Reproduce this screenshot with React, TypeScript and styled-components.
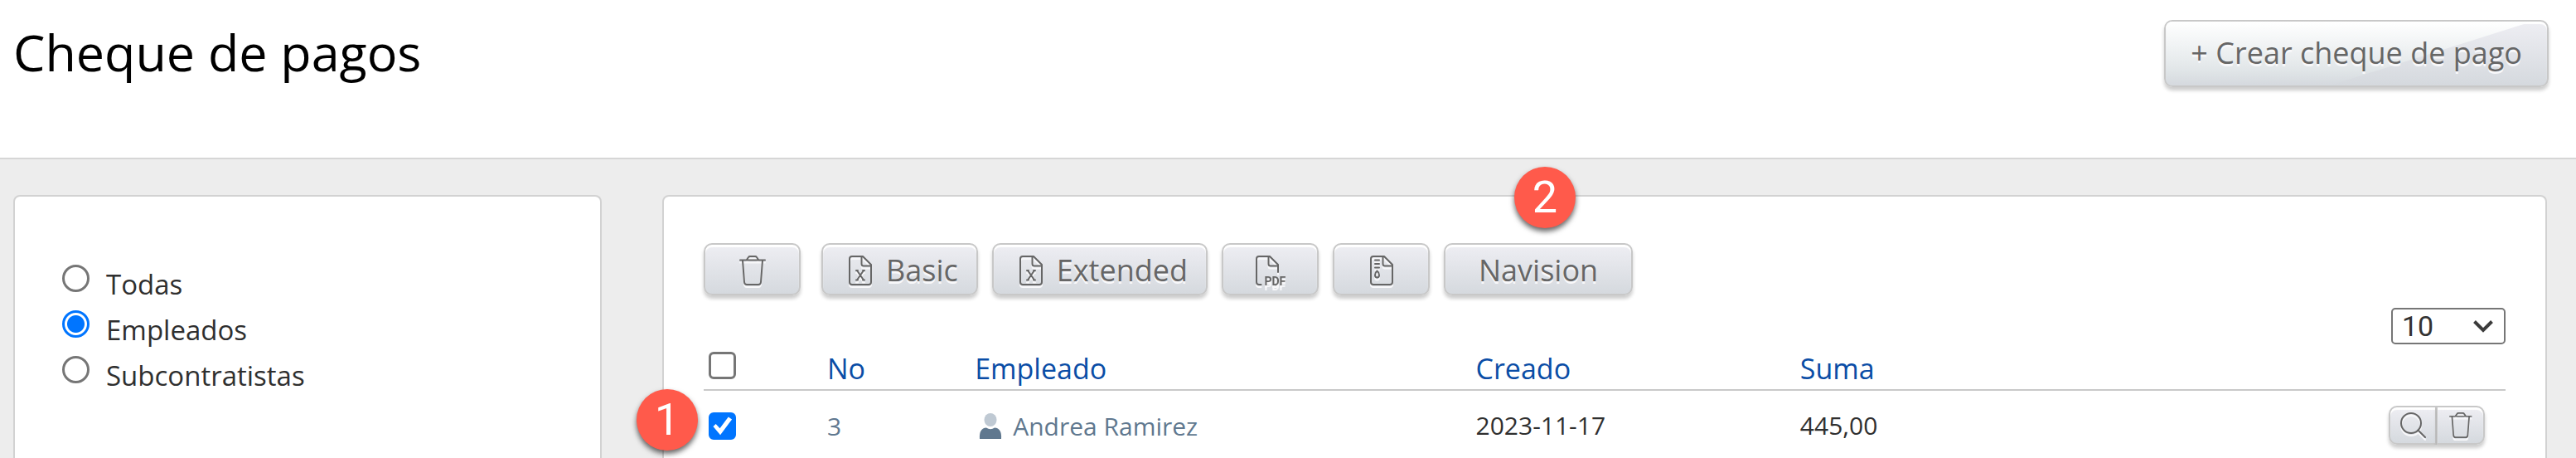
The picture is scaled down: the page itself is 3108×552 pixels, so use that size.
import React, { useState } from "react";
import styled, { createGlobalStyle, css } from "styled-components";

const GlobalStyle = createGlobalStyle`
  *, *::before, *::after { box-sizing: border-box; }
  body {
    margin: 0;
    background: #ededed;
    color: #2f2f2f;
    font-family: "Open Sans", "Noto Sans", sans-serif;
  }
`;

const Page = styled.div`
  display: flex;
  flex-direction: column;
  min-height: 100vh;
`;

const Header = styled.header`
  display: flex;
  align-items: flex-start;
  justify-content: space-between;
  padding: 24px 33px 85px 16px;
  background: #fff;
  border-bottom: 2px solid #d6d6d6;
`;

const Title = styled.h1`
  margin: 0;
  font-size: 61px;
  font-weight: 400;
  line-height: 78px;
  color: #000;
`;

const Content = styled.main`
  flex: 1;
  display: grid;
  grid-template-columns: 710px minmax(0, 1fr);
  gap: 73px;
  padding: 43px 35px 0 16px;
`;

const cardStyle = css`
  background: #fff;
  border: 2px solid #d2d2d2;
  border-bottom: 0;
  border-radius: 8px 8px 0 0;
`;

const Sidebar = styled.aside`
  ${cardStyle}
  padding: 76px 57px 0;
`;

const Panel = styled.section`
  ${cardStyle}
  padding: 56px 48px 0;
`;

const FilterGroup = styled.fieldset`
  margin: 0;
  padding: 0;
  border: 0;
`;

const FilterOption = styled.label`
  display: flex;
  align-items: flex-start;
  gap: 20px;
  height: 55px;
  font-size: 33px;
  line-height: 59px;
`;

const Radio = styled.input`
  appearance: none;
  flex: none;
  width: 33px;
  height: 33px;
  margin: 6px 0 0;
  border: 3px solid #767676;
  border-radius: 50%;
  background: #fff;
  &:checked {
    border-color: #0075ff;
    background: radial-gradient(circle, #0075ff 10px, #fff 11px);
  }
`;

const Checkbox = styled.input`
  appearance: none;
  display: block;
  width: 33px;
  height: 33px;
  margin: 0;
  border: 3px solid #767676;
  border-radius: 6px;
  background: #fff;
  &:checked {
    border-color: #0075ff;
    background: #0075ff;
  }
  &:checked::before {
    content: "";
    display: block;
    height: 27px;
    background: #fff;
    clip-path: polygon(9% 52%, 21% 41%, 39% 60%, 77% 9%, 93% 20%, 41% 90%);
  }
`;

const buttonStyle = css`
  color: #666;
  font-family: inherit;
  border: 2px solid #c8c8c8;
  background: linear-gradient(#eeeef3, #d5d9de);
  box-shadow: inset 0 3px 1px #fff, 0 4px 4px rgba(0, 0, 0, 0.2);
  text-shadow: 0 3px 0 #f8f8fa;
  cursor: pointer;
`;

const CreateButton = styled.button`
  ${buttonStyle}
  position: relative;
  height: 81px;
  padding: 0 30px 2px;
  border-radius: 10px;
  font-size: 36px;
  line-height: 48px;
  &::before {
    content: "";
    position: absolute;
    inset: 0;
    border-radius: 8px;
    background: linear-gradient(#fff, rgba(226, 231, 233, 0.9) 75%, #d5d9de);
    clip-path: polygon(0 0, 96% 0, 43% 100%, 0 100%);
  }
`;

const CreateLabel = styled.span`
  position: relative;
`;

const Toolbar = styled.div`
  display: flex;
  gap: 17px;
`;

const ToolGroup = styled.div`
  margin-right: 8px;
`;

const toolPadding = {
  icon: "2px 0 0",
  text: "2px 40px 0",
  labelled: "2px 22px 0 31px",
};

const ToolButton = styled.button<{ $kind: keyof typeof toolPadding }>`
  ${buttonStyle}
  position: relative;
  display: flex;
  align-items: center;
  justify-content: center;
  gap: 17px;
  height: 63px;
  min-width: 117px;
  padding: ${(p) => toolPadding[p.$kind]};
  border-radius: 10px;
  font-size: 36px;
  line-height: 48px;
`;

const Icon = styled.svg`
  flex: none;
  overflow: visible;
  fill: none;
  stroke: currentColor;
  stroke-width: 2;
  stroke-linecap: round;
  stroke-linejoin: round;
  filter: drop-shadow(0 3px 0 #f8f8fa);
`;

const IconText = styled.text`
  fill: currentColor;
  stroke: none;
  font: 700 14px Roboto, sans-serif;
`;

const Pager = styled.div`
  display: flex;
  justify-content: flex-end;
  margin-top: 15px;
`;

const SelectWrap = styled.div`
  display: grid;
  align-items: center;
  justify-items: end;
`;

const Select = styled.select`
  grid-area: 1 / 1;
  appearance: none;
  width: 138px;
  height: 44px;
  padding: 0 11px;
  border: 2px solid #767676;
  border-radius: 5px;
  background: #fff;
  color: #333;
  font: 34px Roboto, Arial, sans-serif;
`;

const Chevron = styled.svg`
  grid-area: 1 / 1;
  margin-right: 15px;
  fill: none;
  stroke: #3c3c3c;
  stroke-width: 4;
  pointer-events: none;
`;

const Table = styled.table`
  width: 100%;
  border-collapse: collapse;
  table-layout: fixed;
`;

const Col = styled.col<{ $width?: string }>`
  width: ${(p) => p.$width ?? "auto"};
`;

const HeadCell = styled.th`
  height: 55px;
  padding: 4px 25px 0;
  border-bottom: 2px solid #c9c9c9;
  color: #0a4da6;
  font-size: 34px;
  font-weight: 400;
  line-height: 46px;
  text-align: left;
`;

const Cell = styled.td`
  height: 84px;
  padding: 0 25px;
  font-size: 30px;
  line-height: 40px;
`;

const HeadCheckCell = styled(HeadCell)`
  padding: 0 6px 3px;
`;

const CheckCell = styled(Cell)`
  position: relative;
  padding: 2px 6px 0;
`;

const HeadLink = styled.a`
  color: inherit;
  text-decoration: none;
`;

const RowLink = styled.a`
  display: inline-flex;
  align-items: center;
  gap: 13px;
  color: #60788f;
  text-decoration: none;
  vertical-align: middle;
`;

const PersonIcon = styled.svg`
  margin-left: 5px;
`;

const RowActions = styled.div`
  display: flex;
  justify-content: flex-end;
`;

const RowButton = styled.button`
  ${buttonStyle}
  display: flex;
  align-items: center;
  justify-content: center;
  width: 58px;
  height: 47px;
  padding: 0;
  &:first-child {
    border-radius: 10px 0 0 10px;
  }
  &:last-child {
    border-left-width: 1px;
    border-radius: 0 10px 10px 0;
  }
`;

const StepBadge = styled.span<{ $place: "row" | "button" }>`
  position: absolute;
  ${(p) => (p.$place === "row" ? "left: -81px; top: -2px;" : "left: 83px; top: -94px;")}
  width: 74px;
  height: 74px;
  border-radius: 50%;
  background: #ff5a4b;
  box-shadow: 0 4px 6px rgba(0, 0, 0, 0.6);
  color: #fff;
  font: 54px/74px Roboto, Arial, sans-serif;
  text-align: center;
  text-shadow: none;
`;

const TrashIcon = ({ height = 36 }: { height?: number }) => (
  <Icon height={height} viewBox="0 0 32 36" aria-hidden="true">
    <path d="M1 5.500H31M9 5L11 2Q11.600 1 13 1H19Q20.400 1 21 2L23 5M4 6L6 32Q6.300 35 9 35H23Q25.700 35 26 32L28 6" />
  </Icon>
);

const SheetIcon = () => (
  <Icon width="28" height="36" viewBox="0 0 28 36" aria-hidden="true">
    <path d="M4 1H17L27 11V32Q27 35 24 35H4Q1 35 1 32V4Q1 1 4 1ZM15.500 1.500V10Q15.500 12.500 18 12.500H26.500" />
    <path d="M10 18L18 29.500M18 18L10 29.500M9 18H11M17 18H19M9 29.500H11M17 29.500H19" />
  </Icon>
);

const PdfIcon = () => (
  <Icon width="36" height="36" viewBox="0 0 36 36" aria-hidden="true">
    <path d="M6.500 35H4Q1 35 1 32V4Q1 1 4 1H17L27 11V20M15.500 1.500V10Q15.500 12.500 18 12.500H26.500" />
    <IconText x="10.500" y="35.500">PDF</IconText>
  </Icon>
);

const ZipIcon = () => (
  <Icon width="28" height="36" viewBox="0 0 28 36" aria-hidden="true">
    <path d="M4 1H17L27 11V32Q27 35 24 35H4Q1 35 1 32V4Q1 1 4 1ZM15.500 1.500V10Q15.500 12.500 18 12.500H26.500" />
    <path d="M6 5.500H11M6 10H11M6 14.500H11" />
    <path d="M8.500 18.500Q11 20.500 11 23.500Q11 26.500 8.500 26.500Q6 26.500 6 23.500Q6 20.500 8.500 18.500Z" />
  </Icon>
);

const SearchIcon = () => (
  <Icon width="31" height="31" viewBox="0 0 31 31" aria-hidden="true">
    <circle cx="13" cy="13" r="12" />
    <path d="M21.500 21.500L30 30" />
  </Icon>
);

const filters = ["Todas", "Empleados", "Subcontratistas"];

export default function App() {
  const [filter, setFilter] = useState("Empleados");
  const [selected, setSelected] = useState(true);

  return (
    <>
      <GlobalStyle />
      <Page>
        <Header>
          <Title>Cheque de pagos</Title>
          <CreateButton type="button">
            <CreateLabel>+ Crear cheque de pago</CreateLabel>
          </CreateButton>
        </Header>
        <Content>
          <Sidebar>
            <FilterGroup aria-label="Cheque de pagos">
              {filters.map((name) => (
                <FilterOption key={name}>
                  <Radio
                    type="radio"
                    name="filter"
                    checked={filter === name}
                    onChange={() => setFilter(name)}
                  />
                  {name}
                </FilterOption>
              ))}
            </FilterGroup>
          </Sidebar>
          <Panel>
            <Toolbar>
              <ToolGroup>
                <ToolButton type="button" $kind="icon" aria-label="Eliminar">
                  <TrashIcon />
                </ToolButton>
              </ToolGroup>
              <ToolButton type="button" $kind="labelled">
                <SheetIcon />
                Basic
              </ToolButton>
              <ToolButton type="button" $kind="labelled">
                <SheetIcon />
                Extended
              </ToolButton>
              <ToolButton type="button" $kind="icon" aria-label="PDF">
                <PdfIcon />
              </ToolButton>
              <ToolButton type="button" $kind="icon" aria-label="ZIP">
                <ZipIcon />
              </ToolButton>
              <ToolButton type="button" $kind="text">
                Navision
                <StepBadge $place="button">2</StepBadge>
              </ToolButton>
            </Toolbar>
            <Pager>
              <SelectWrap>
                <Select aria-label="Filas por página" defaultValue="10">
                  <option>10</option>
                  <option>25</option>
                  <option>50</option>
                </Select>
                <Chevron width="24" height="16" viewBox="0 0 24 16" aria-hidden="true">
                  <path d="M1.500 2.500L12 13L22.500 2.500" />
                </Chevron>
              </SelectWrap>
            </Pager>
            <Table>
              <colgroup>
                <Col $width="5.7%" />
                <Col $width="8.2%" />
                <Col $width="27.8%" />
                <Col $width="18%" />
                <Col />
                <Col $width="10%" />
              </colgroup>
              <thead>
                <tr>
                  <HeadCheckCell>
                    <Checkbox
                      type="checkbox"
                      aria-label="Seleccionar todo"
                    />
                  </HeadCheckCell>
                  <HeadCell><HeadLink href="#no">No</HeadLink></HeadCell>
                  <HeadCell><HeadLink href="#empleado">Empleado</HeadLink></HeadCell>
                  <HeadCell><HeadLink href="#creado">Creado</HeadLink></HeadCell>
                  <HeadCell><HeadLink href="#suma">Suma</HeadLink></HeadCell>
                  <HeadCell />
                </tr>
              </thead>
              <tbody>
                <tr>
                  <CheckCell>
                    <Checkbox
                      type="checkbox"
                      aria-label="Seleccionar 3"
                      checked={selected}
                      onChange={(e) => setSelected(e.target.checked)}
                    />
                    <StepBadge $place="row">1</StepBadge>
                  </CheckCell>
                  <Cell><RowLink href="#3">3</RowLink></Cell>
                  <Cell>
                    <RowLink href="#andrea-ramirez">
                      <PersonIcon width="28" height="31" viewBox="0 0 28 31" aria-hidden="true">
                        <ellipse cx="14" cy="8" rx="7.500" ry="8" fill="#bfc9d3" />
                        <path d="M1 31Q0 18 9 17.500Q14 21 19 17.500Q28 18 27 31Z" fill="#60788f" />
                      </PersonIcon>
                      Andrea Ramirez
                    </RowLink>
                  </Cell>
                  <Cell>2023-11-17</Cell>
                  <Cell>445,00</Cell>
                  <Cell>
                    <RowActions>
                      <RowButton type="button" aria-label="Ver"><SearchIcon /></RowButton>
                      <RowButton type="button" aria-label="Eliminar"><TrashIcon height={31} /></RowButton>
                    </RowActions>
                  </Cell>
                </tr>
              </tbody>
            </Table>
          </Panel>
        </Content>
      </Page>
    </>
  );
}
